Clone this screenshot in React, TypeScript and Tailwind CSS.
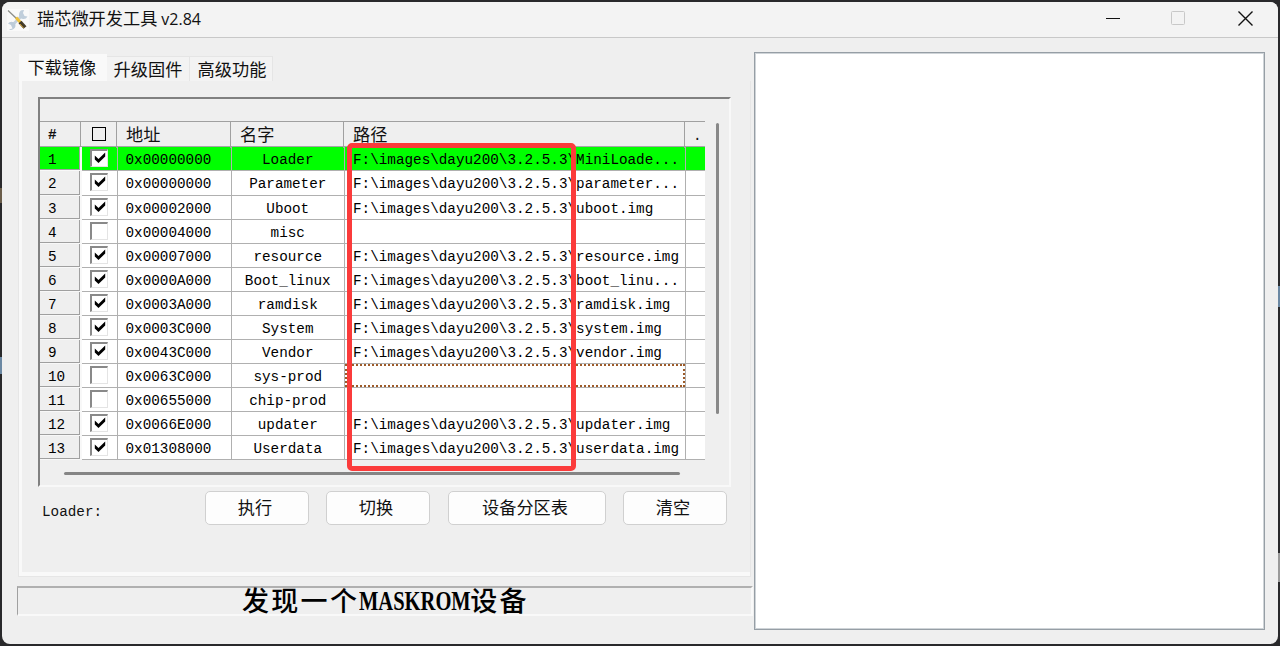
import React from "react";

type Row = { addr: string; name: string; path: string; on: boolean };

const DIR = "F:\\images\\dayu200\\3.2.5.3\\";

const rows: Row[] = [
    { addr: "0x00000000", name: "Loader", path: DIR + "MiniLoade...", on: true },
    { addr: "0x00000000", name: "Parameter", path: DIR + "parameter...", on: true },
    { addr: "0x00002000", name: "Uboot", path: DIR + "uboot.img", on: true },
    { addr: "0x00004000", name: "misc", path: "", on: false },
    { addr: "0x00007000", name: "resource", path: DIR + "resource.img", on: true },
    { addr: "0x0000A000", name: "Boot_linux", path: DIR + "boot_linu...", on: true },
    { addr: "0x0003A000", name: "ramdisk", path: DIR + "ramdisk.img", on: true },
    { addr: "0x0003C000", name: "System", path: DIR + "system.img", on: true },
    { addr: "0x0043C000", name: "Vendor", path: DIR + "vendor.img", on: true },
    { addr: "0x0063C000", name: "sys-prod", path: "", on: false },
    { addr: "0x00655000", name: "chip-prod", path: "", on: false },
    { addr: "0x0066E000", name: "updater", path: DIR + "updater.img", on: true },
    { addr: "0x01308000", name: "Userdata", path: DIR + "userdata.img", on: true },
];

const COLS = "grid grid-rows-[100%] grid-cols-[42px_35.5px_114px_113.5px_341px_19px]";

const ToolIcon = () => (
    <svg width="22" height="22" viewBox="0 0 22 22" fill="none">
        <rect width="22" height="22" fill="#f9f9f9" />
        {/* wrench */}
        <path d="M5 16.500 L16 5.500" stroke="#c3d0dc" strokeWidth="3" />
        <path d="M17 1 a4.500 4.500 0 1 0 3.500 6.500 l-3-.5 l-1.500-3z" fill="#c0cedb" />
        <path d="M1 14.500 l3 1.500 l1.500 3.500 l-3.500 1 a4.500 4.500 0 0 0 6-6 a4.500 4.500 0 0 0-7 0z" fill="#bccbd9" />
        {/* screwdriver */}
        <path d="M1 1.500 L10 10" stroke="#8b8d88" strokeWidth="1.300" />
        <path d="M9 8.500 L14 14" stroke="#edc13d" strokeWidth="3" />
        <path d="M13 13 L18 18.500" stroke="#453c28" strokeWidth="4" />
        <path d="M13 15 L16.500 19" stroke="#d0a033" strokeWidth="1" />
    </svg>
);

const CheckBox = ({ on }: { on: boolean }) => (
    <span className="mt-[2px] ml-2 flex h-[18px] w-[18px] items-start justify-center border-t-2 border-l-2 border-r border-b border-t-[#898989] border-l-[#898989] border-r-[#e4e4e4] border-b-[#e4e4e4] bg-white pt-px">
        {on && (
            <svg width="12" height="12" viewBox="0 0 12 12">
                <path d="M0.800 3.500 L4.500 7 L11.200 0.500 V4.500 L4.500 11 L0.800 7.500z" fill="#000" />
            </svg>
        )}
    </span>
);

const Tab = ({ label, className }: { label: string; className: string }) => (
    <div className={"flex justify-center text-[17.2px] whitespace-nowrap " + className}>{label}</div>
);

const PushButton = ({ label, className }: { label: string; className: string }) => (
    <button className={"h-[34px] rounded-[5px] border border-[#d0d0d0] bg-[#fdfdfd] pr-1 pb-0.5 text-[17.2px] leading-none " + className}>
        {label}
    </button>
);

const PartitionGrid = () => (
    <div className="w-[665px] overflow-hidden">
        <div className="h-[23px] border-b border-[#a0a0a0]" />

        {/* Column headers */}
        <div className="grid h-[25.400px] grid-cols-[41px_36px_114px_113px_341px_20px] border-b border-[#a6a6a6] text-[17.2px] leading-[24px]">
            <div className="border-r border-[#a0a0a0] pl-2 font-['Liberation_Mono'] text-[14.3px] leading-[26px] font-bold">#</div>
            <div className="border-r border-[#a0a0a0] pt-[5px] pl-[11px]">
                <div className="h-[14px] w-[14px] border-[1.500px] border-black" />
            </div>
            <div className="border-r border-[#a0a0a0] pl-[9px]">地址</div>
            <div className="border-r border-[#a0a0a0] pl-[9px]">名字</div>
            <div className="border-r border-[#a0a0a0] pl-[9px]">路径</div>
            <div className="pt-0.5 pl-2 font-['Liberation_Mono'] text-[14.3px]">.</div>
        </div>

        {/* Partition rows */}
        {rows.map((row, i) => (
            <div
                key={i}
                className={COLS + " h-[24.08px] font-['Liberation_Mono'] text-[14.3px] leading-[26px] whitespace-pre text-black " + (i === 0 ? "bg-[#00ff00]" : "bg-white")}
            >
                <div className="border-r-2 border-b border-r-[#f8f8f8] border-b-[#f8f8f8]">
                    <div className={"h-full border-r border-b border-[#a0a0a0] pl-2 " + (i === 0 ? "bg-[#00ff00]" : "bg-[#efefef]")}>{i + 1}</div>
                </div>
                <div className="border-r border-b border-[#b0b0b0]">
                    <CheckBox on={row.on} />
                </div>
                <div className="border-r border-b border-[#b0b0b0] pl-2">{row.addr}</div>
                <div className="border-r border-b border-[#b0b0b0] text-center">{row.name}</div>
                <div className="relative border-r border-b border-[#b0b0b0] pl-2">
                    {row.path}
                    {i === 9 && <span className="absolute inset-0 border-2 border-dotted border-[#9c5a28]" />}
                </div>
                <div className="border-b border-[#b0b0b0]" />
            </div>
        ))}
    </div>
);

export default function App() {
    return (
        <div className="relative h-[646px] w-[1280px] overflow-hidden bg-[#29292b] px-[2px] pt-[2px] font-['Noto_Sans_CJK_SC',sans-serif] text-[#111]">
            {/* Slivers of the window behind */}
            <div className="absolute top-[357px] left-0 h-[17px] w-[2px] bg-[#6b88a3]" />
            <div className="absolute top-[188px] left-0 h-[15px] w-[2px] bg-[#6a5d4a]" />
            <div className="absolute top-[286px] right-0 h-[21px] w-[2px] bg-[#6b88a3]" />
            <div className="absolute top-[553px] right-0 h-[29px] w-[2px] bg-[#9a9a9a]" />

            <div className="flex h-[642px] flex-col overflow-hidden rounded-lg bg-[#efefef]">
                {/* Title bar */}
                <header className="flex h-9 shrink-0 items-center border-b border-[#c8c8c8] bg-[#f3f3f3] pl-[5px]">
                    <ToolIcon />
                    <h1 className="ml-2 pb-[3px] text-[17.2px] leading-none whitespace-pre">
                        瑞芯微开发工具<span className="ml-1 font-['Open_Sans'] text-[16px]">v2.84</span>
                    </h1>
                    <svg className="mb-[3px] ml-auto" width="174" height="34" viewBox="0 0 174 34" fill="none">
                        <path d="M2 17.500 H16" stroke="#111" />
                        <rect x="67.500" y="10.500" width="13" height="13" rx="1" stroke="#c8c8c8" />
                        <path d="M134.500 10.500 L148.500 24.500 M148.500 10.500 L134.500 24.500" stroke="#111" strokeWidth="1.400" />
                    </svg>
                </header>

                <main className="flex flex-1">
                    <div className="w-[752px] pt-4">
                        {/* Tabs */}
                        <div className="ml-[17px] flex h-[27px] items-end">
                            <Tab label="下载镜像" className="h-[27px] w-[88px] bg-[#f9f9f9] pr-0.5 leading-[25px]" />
                            <Tab label="升级固件" className="h-[25px] w-[83px] border-t border-r border-[#e5e5e5] bg-[#f3f3f3] leading-[24px]" />
                            <Tab label="高级功能" className="h-[25px] w-[83px] border-t border-r border-[#e5e5e5] bg-[#f3f3f3] pl-0.5 leading-[24px]" />
                        </div>

                        {/* Tab page */}
                        <section className="ml-4 h-[496px] w-[733px] border-r border-b border-l border-[#e6e6e6]">
                            <div className="h-[495px] border-b-4 border-l-[3px] border-[#f9f9f9] pt-4 pl-4">
                                <div className="relative h-[390px] w-[693px] border-t-2 border-r-2 border-b-2 border-l-2 border-t-[#808080] border-r-[#f8f8f8] border-b-[#f8f8f8] border-l-[#808080]">
                                    <div className="flex">
                                        <PartitionGrid />
                                        <div className="mt-[24px] ml-[11px] h-[291px] w-[3px] rounded bg-[#888]" />
                                    </div>
                                    <div className="mt-3 ml-6 h-[3px] w-[616px] rounded bg-[#858585]" />
                                    {/* Highlight frame round the shared folder */}
                                    <div className="absolute top-[44px] left-[307px] h-[328px] w-[229px] rounded-[5px] border-[5px] border-[#fb3b3b]" />
                                </div>

                                <div className="mt-1 flex">
                                    <span className="mt-3 ml-1 w-[163px] font-['Liberation_Mono'] text-[14.3px] leading-[18px]">Loader:</span>
                                    <PushButton label="执行" className="w-[104px]" />
                                    <PushButton label="切换" className="ml-[17px] w-[104px]" />
                                    <PushButton label="设备分区表" className="ml-[18px] w-[158px]" />
                                    <PushButton label="清空" className="ml-[17px] w-[104px]" />
                                </div>
                            </div>
                        </section>

                        {/* Device status */}
                        <footer className="mt-[9px] ml-[15px] flex h-[30px] w-[736px] items-center border-t-2 border-r-2 border-b-2 border-l border-t-[#b0b0b0] border-r-[#f9f9f9] border-b-[#f9f9f9] border-l-[#a0a0a0] pb-[3px] pl-[224px] text-[27px] leading-none font-medium whitespace-nowrap text-black">
                            <span className="tracking-[2.300px]">发现一个</span>
                            <span className="w-[111px]">
                                <span className="inline-block origin-left scale-x-[0.76] font-['Liberation_Serif'] font-bold">MASKROM</span>
                            </span>
                            <span className="tracking-[2.300px]">设备</span>
                        </footer>
                    </div>

                    <div className="mt-[14px] h-[578px] w-[511px] border border-[#969ea5] bg-white shadow-[inset_0_0_0_1px_#cfd4d8]" />
                </main>
            </div>
        </div>
    );
}
